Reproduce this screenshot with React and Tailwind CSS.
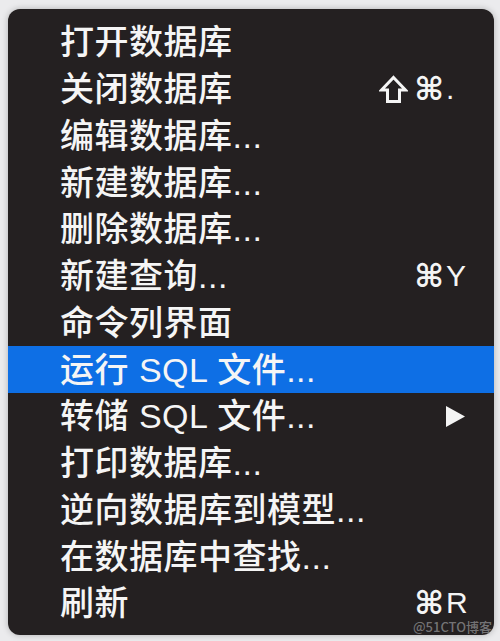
const items = [
  { label: "打开数据库" },
  { label: "关闭数据库", shift: true, key: "." },
  { label: "编辑数据库..." },
  { label: "新建数据库..." },
  { label: "删除数据库..." },
  { label: "新建查询...", cmd: true, key: "Y" },
  { label: "命令列界面" },
  { label: "运行 SQL 文件...", active: true },
  { label: "转储 SQL 文件...", submenu: true },
  { label: "打印数据库..." },
  { label: "逆向数据库到模型..." },
  { label: "在数据库中查找..." },
  { label: "刷新", cmd: true, key: "R" },
];

function ShiftGlyph() {
  return (
    <svg width="29" height="29" viewBox="0 0 29 29" className="mr-[6px]">
      <path
        d="M14.5 2.5 L26.5 15 L20.5 15 L20.5 26.5 L8.5 26.5 L8.5 15 L2.5 15 Z"
        fill="none"
        stroke="#f5f5f5"
        strokeWidth="3"
        strokeLinejoin="miter"
      />
    </svg>
  );
}

function MenuRow({ item }) {
  return (
    <div
      className={`flex h-[46.75px] items-center justify-between pl-[52px] pr-[26px] ${
        item.active ? "bg-[#0e6fe5]" : ""
      }`}
    >
      <span className="text-[34px] leading-none tracking-[0.5px]">{item.label}</span>
      {item.key && (
        <span className="flex items-center">
          {item.shift && <ShiftGlyph />}
          <span className="font-['DejaVu_Sans',sans-serif] text-[32px] font-bold leading-none">⌘</span>
          <span className="ml-[2px] w-[22px] text-[30px] font-normal leading-none">{item.key}</span>
        </span>
      )}
      {item.submenu && (
        <svg width="21" height="23" viewBox="0 0 21 23" className="mr-[2px]">
          <path d="M1 1 L20 11.5 L1 22 Z" fill="#f4f4f4" />
        </svg>
      )}
    </div>
  );
}

export default function App() {
  return (
    <div className="relative h-[641px] w-[500px] overflow-hidden bg-[#ebebed] pt-[9px] pl-[8px] font-['Liberation_Sans','Noto_Sans_CJK_SC',sans-serif] font-medium text-[#f5f5f5]">
      <div className="h-[626px] w-[486px] rounded-[12px] bg-[#242021] pt-[10px] shadow-[0_0_6px_rgba(0,0,0,0.25)]">
        {items.map((item) => (
          <MenuRow key={item.label} item={item} />
        ))}
      </div>
      <span className="absolute right-[8px] bottom-[8px] font-['Noto_Sans_CJK_SC',sans-serif] text-[13px] leading-none text-[#8a8a8c]/80">
        @51CTO博客
      </span>
    </div>
  );
}
